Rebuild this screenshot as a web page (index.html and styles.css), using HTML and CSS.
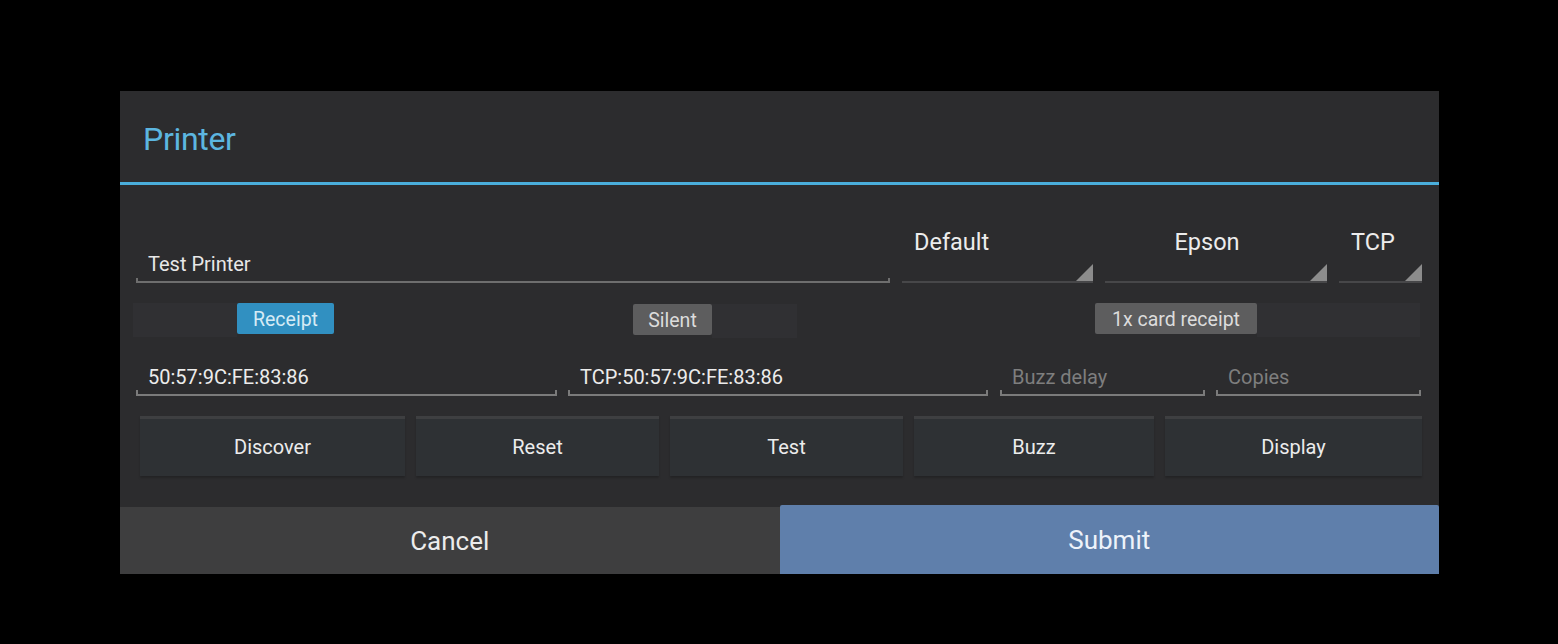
FILE: index.html
```html
<!DOCTYPE html>
<html>
<head>
<meta charset="utf-8">
<link rel="stylesheet" href="styles.css">
</head>
<body>
<div class="dialog">
  <div class="title">Printer</div>
  <div class="content">
    <div class="row row-top">
      <div class="field field-name"><span class="value">Test Printer</span></div>
      <div class="spinner sp-default"><span>Default</span></div>
      <div class="spinner sp-epson center"><span>Epson</span></div>
      <div class="spinner sp-tcp"><span>TCP</span></div>
    </div>
    <div class="row row-toggles">
      <div class="toggle t-receipt"><div class="track"></div><div class="chip chip-on">Receipt</div></div>
      <div class="toggle t-silent"><div class="chip">Silent</div><div class="track"></div></div>
      <div class="toggle t-card"><div class="chip">1x card receipt</div><div class="track"></div></div>
    </div>
    <div class="row row-fields">
      <div class="field f-mac"><span class="value">50:57:9C:FE:83:86</span></div>
      <div class="field f-tcp"><span class="value">TCP:50:57:9C:FE:83:86</span></div>
      <div class="field f-small"><span class="hint">Buzz delay</span></div>
      <div class="field f-small"><span class="hint">Copies</span></div>
    </div>
    <div class="row row-buttons">
      <div class="btn">Discover</div>
      <div class="btn">Reset</div>
      <div class="btn">Test</div>
      <div class="btn">Buzz</div>
      <div class="btn">Display</div>
    </div>
  </div>
  <div class="actions">
    <div class="action cancel">Cancel</div>
    <div class="action submit">Submit</div>
  </div>
</div>
</body>
</html>
```

FILE: styles.css
```css
* { box-sizing: border-box; }
html, body { margin: 0; padding: 0; background: #000; }
body {
  width: 1558px;
  height: 644px;
  padding: 91px 0 0 120px;
  font-family: Roboto, "Liberation Sans", sans-serif;
  color: #e6e6e6;
}
.dialog {
  width: 1319px;
  height: 483px;
  background: #2c2c2e;
  display: flex;
  flex-direction: column;
}
.title {
  height: 94px;
  border-bottom: 3px solid #4aaedb;
  padding: 29px 0 0 23px;
  font-size: 32px;
  color: #5cb6e0;
  letter-spacing: -0.3px;
}
.content {
  flex: 1;
  padding: 40px 17px 0 16px;
  display: flex;
  flex-direction: column;
}
.row { display: flex; }

/* Row 1 */
.row-top { height: 58px; gap: 12px; }
.field { position: relative; }
.field::after {
  content: '';
  position: absolute;
  left: 0; right: 0; bottom: 0;
  height: 4px;
  border: 2px solid #7b7b7b;
  border-top: none;
}
.field-name { width: 754px; }
.field-name::after { border-color: #6e6e6e; height: 3px; }
.field-name .value {
  position: absolute;
  left: 12px; top: 27px;
  font-size: 20px;
  color: #e8e8e8;
}
.spinner {
  position: relative;
  border-bottom: 2px solid #474749;
}
.spinner::after {
  content: '';
  position: absolute;
  right: 0; bottom: 0;
  width: 17px; height: 17px;
  background: #8c8c8c;
  clip-path: polygon(100% 0, 100% 100%, 0 100%);
}
.spinner span {
  position: absolute;
  top: 3px;
  left: 12px;
  font-size: 23.5px;
  color: #ececec;
}
.spinner.center span { left: 0; right: 18px; text-align: center; }
.sp-default { width: 191px; }
.sp-epson { width: 222px; }
.sp-tcp { width: 83px; }

/* Row 2 */
.row-toggles { height: 40px; margin-top: 17px; padding-top: 3px; }
.toggle { display: flex; height: 34px; }
.track { height: 34px; background: #303033; }
.chip {
  height: 31px;
  padding-top: 5px;
  text-align: center;
  font-size: 19.5px;
  color: #dcdcdc;
  background: #5d5d5e;
  border-radius: 2px;
}
.chip-on { background: #3190c1; color: #d6ebf5; }
.t-receipt { margin-left: -3px; }
.t-receipt .track { width: 104px; }
.t-receipt .chip { width: 97px; }
.t-silent { margin-left: 299px; margin-top: 1px; }
.t-silent .chip { width: 79px; }
.t-silent .track { width: 85px; }
.t-card { margin-left: 298px; }
.t-card .chip { width: 162px; }
.t-card .track { width: 163px; }

/* Row 3 */
.row-fields { height: 39px; margin-top: 17px; gap: 11px; }
.f-mac { width: 421px; }
.f-tcp { width: 420px; margin-right: 1px; }
.f-small { width: 205px; }
.row-fields .value, .row-fields .hint {
  position: absolute;
  left: 12px; top: 8px;
  font-size: 20px;
  color: #ececec;
}
.row-fields .hint { color: #7e7e7e; }

/* Row 4 */
.row-buttons {
  margin-top: 20px;
  height: 60px;
  display: grid;
  grid-template-columns: 265px 243px 233px 240px 257px;
  column-gap: 11px;
  padding-left: 4px;
}
.btn {
  background: #2e3134;
  border-top: 3px solid #3e3f41;
  box-shadow: 0 2px 2px rgba(0,0,0,0.2);
  display: flex;
  align-items: center;
  justify-content: center;
  font-size: 20px;
  color: #ececec;
  padding-bottom: 2px;
}

/* Actions */
.actions { height: 67px; display: flex; }
.action {
  flex: 1;
  display: flex;
  align-items: center;
  justify-content: center;
  font-size: 26px;
  color: #ececec;
}
.cancel { background: #3e3e3f; }
.submit { background: #5f7fab; color: #eef3fa; border-radius: 2px 2px 0 0; margin-top: -2px; }
```
